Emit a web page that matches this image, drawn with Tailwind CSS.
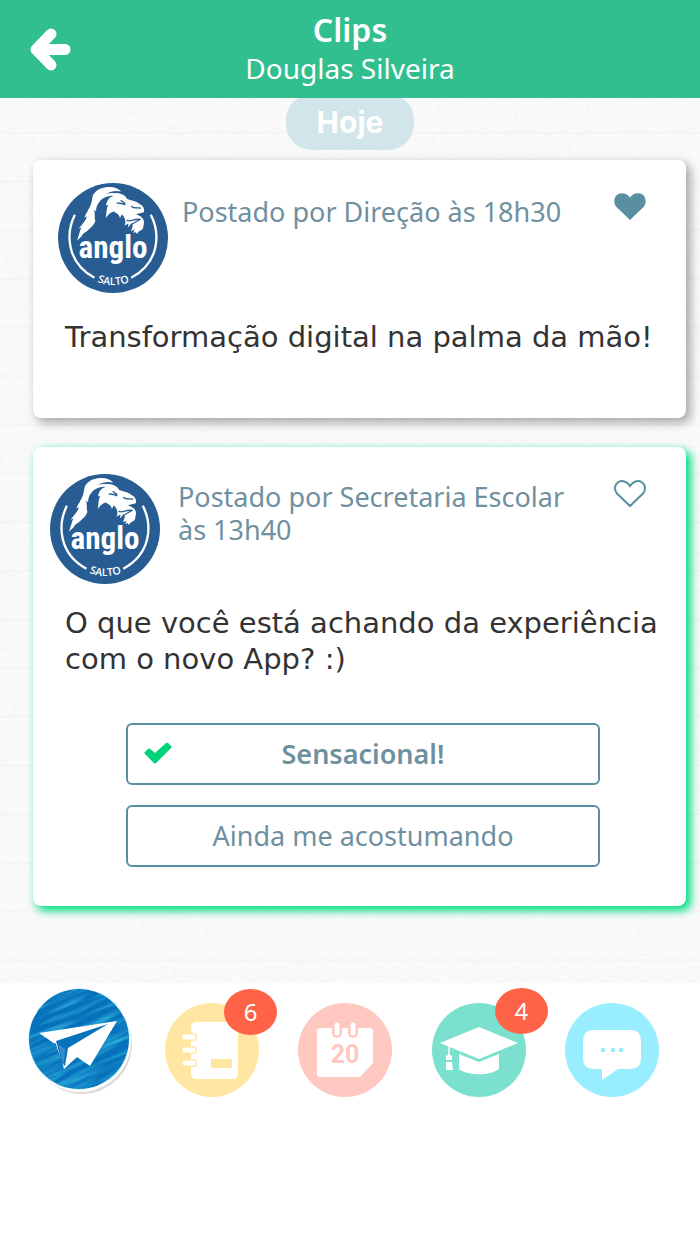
<!DOCTYPE html>
<html lang="pt-BR">
<head>
<meta charset="utf-8">
<meta name="viewport" content="width=device-width, initial-scale=1">
<title>Clips</title>
<script src="https://cdn.jsdelivr.net/npm/@tailwindcss/browser@4"></script>
</head>
<body class="min-h-screen bg-white font-['Noto_Sans',sans-serif] text-[#6f909f]">
<svg class="hidden" aria-hidden="true">
  <symbol id="anglo" viewBox="55 38 332 332">
    <circle cx="221" cy="204" r="166" fill="#275d93"/>
    <path d="M106 134C78 190 80 278 165 324M335 134C364 190 362 278 276 324" fill="none" stroke="#fff" stroke-width="7"/>
    <path fill="#fff" d="M112 212C120 192 120 182 126 172L117 176C130 160 140 150 142 138L134 142C144 122 152 112 156 96L160 76C168 60 184 52 206 50C224 49 238 54 246 64C228 60 214 64 200 72C216 66 230 68 238 76C216 74 198 78 186 88C174 100 170 110 170 124L164 118C168 134 164 144 168 152C164 166 148 180 130 192C126 202 118 206 112 212Z"/>
    <path fill="#fff" d="M199 144C202 130 200 116 207 104L200 106C202 90 210 80 222 78L214 72C234 64 254 70 264 86C276 90 292 92 302 102C312 106 317 116 314 126L290 132C302 136 312 142 314 152C316 160 312 166 312 174C308 184 298 180 294 192L288 186L282 190L286 178L276 184C278 172 284 166 278 158L266 172L268 160L256 166C262 152 256 142 248 132L242 144C240 132 232 130 224 124C214 126 206 134 199 144Z"/>
    <path d="M232 98C244 100 250 98 258 104M244 90L258 100M276 108C284 116 296 112 306 114M262 150C274 158 284 144 302 148C294 154 286 156 280 162" fill="none" stroke="#275d93" stroke-width="4"/>
    <text x="221" y="264" text-anchor="middle" font-family="Liberation Sans Narrow, Roboto Condensed, sans-serif" font-weight="700" font-size="94" fill="#fff">anglo</text>
    <path id="arc" d="M160 331Q221 361 284 331" fill="none"/>
    <text font-family="Open Sans, sans-serif" font-weight="600" font-size="32" fill="#fff" text-anchor="middle"><textPath href="#arc" startOffset="50%">SALTO</textPath></text>
  </symbol>
</svg>

<header class="relative z-10 flex h-[98px] items-center justify-center bg-[#32bf8f] text-white">
  <button aria-label="Voltar" class="absolute left-[30px] top-7">
    <svg class="h-[43px] w-[41px]" viewBox="0 0 41 43" fill="none" stroke="#fff" stroke-width="11" stroke-linecap="round" stroke-linejoin="round"><path d="M21 6L6 21.500L21 37M8 21.500H35"/></svg>
  </button>
  <div class="text-center">
    <h1 class="text-[32px] font-semibold leading-[38px]">Clips</h1>
    <p class="text-[28px] leading-[38px]">Douglas Silveira</p>
  </div>
</header>

<main class="relative isolate bg-[#fafafa] pr-3.5 pb-[77px] pl-[33px]">
  <svg class="absolute inset-0 -z-10 h-full w-full" aria-hidden="true">
    <filter id="paper" x="0" y="0" width="100%" height="100%"><feTurbulence type="fractalNoise" baseFrequency="0.22" numOctaves="3"/><feColorMatrix values="0 0 0 0 0.5 0 0 0 0 0.5 0 0 0 0 0.5 0.140 0 0 0 -0.055"/></filter>
    <rect width="100%" height="100%" filter="url(#paper)"/>
  </svg>
  <div class="absolute inset-0 -z-10 bg-[linear-gradient(transparent_34px,#f4f4f4_34px,#f4f4f4_36px,transparent_36px)] bg-[length:100%_5.5%]"></div>

  <div class="flex justify-center pr-[19px]">
    <h2 class="-mt-1 flex h-14 w-32 items-center justify-center rounded-[26px] bg-[#d2e5ea] font-['Inter',sans-serif] text-[30px] font-bold text-white">Hoje</h2>
  </div>

  <article class="mt-2.5 h-[258px] rounded-lg bg-white px-[25px] pt-[23px] shadow-[4px_4px_10px_1px_#00000050]">
    <div class="flex items-start gap-3.5">
      <svg class="size-[110px] shrink-0" role="img" aria-label="Anglo Salto"><use href="#anglo"/></svg>
      <p class="mt-3 flex-1 text-[27px] leading-[33px]">Postado por Direção às 18h30</p>
      <button aria-label="Descurtir" class="mt-2.5 mr-[15px]"><svg class="h-7 w-8" viewBox="0 0 32 28" fill="#5a8fa1"><path d="M16 27L2.500 14C-1 10 0 4 3.500 1.500C7.500-1 13 0 16 4.500C19 0 24.500-1 28.500 1.500C32 4 33 10 29.500 14Z"/></svg></button>
    </div>
    <p class="mt-[26px] ml-[7px] font-['DejaVu_Sans',sans-serif] text-[29px] leading-9 text-[#333]">Transformação digital na palma da mão!</p>
  </article>

  <article class="mt-[29px] rounded-lg bg-white px-[17px] pt-[27px] pb-[39px] shadow-[4px_4px_8px_1px_#00df82]">
    <div class="flex items-start gap-[18px]">
      <svg class="size-[110px] shrink-0" role="img" aria-label="Anglo Salto"><use href="#anglo"/></svg>
      <p class="mt-1.5 flex-1 text-[27px] leading-[33px]">Postado por Secretaria Escolar<br>às 13h40</p>
      <button aria-label="Curtir" class="mt-1.5 mr-[23px]"><svg class="h-7 w-8" viewBox="0 0 32 28" fill="none" stroke="#5a8fa1" stroke-width="2"><path d="M16 26L3 13.500C0 10 .5 4.500 4 2.300C8 0 13 1 16 6C19 1 24 0 28 2.300C31.500 4.500 32 10 29 13.500Z"/></svg></button>
    </div>
    <p class="mt-[21px] ml-[15px] font-['DejaVu_Sans',sans-serif] text-[29px] leading-9 text-[#333]">O que você está achando da experiência<br>com o novo App? :)</p>
    <div class="mt-[46px] mr-[69px] ml-[76px] flex flex-col gap-5">
      <button class="relative h-[62px] rounded-md border-2 border-[#5a8fa1] text-[27px] font-semibold">
        <svg class="absolute left-4 top-[17px] h-[22px] w-7" viewBox="0 0 28 22" fill="#00d27a" stroke="#00d27a" stroke-width="3" stroke-linejoin="round"><path d="M2 11L5 8L11 13L23 2L26 5L11 20Z"/></svg>
        Sensacional!
      </button>
      <button class="h-[62px] rounded-md border-2 border-[#5a8fa1] text-[27px]">Ainda me acostumando</button>
    </div>
  </article>
</main>

<nav class="grid grid-cols-5 justify-items-center pt-1 pr-[21px] pl-3">
  <a href="#clips" aria-label="Clips">
    <svg class="h-[110px] w-[106px]" viewBox="0 0 106 110">
      <defs><clipPath id="disc"><circle cx="53" cy="52" r="51"/></clipPath>
      <filter id="scratch" x="0" y="0" width="100%" height="100%"><feTurbulence type="fractalNoise" baseFrequency="0.02 0.22" numOctaves="2" seed="4"/><feColorMatrix values="0 0 0 0 0.050 0 0 0 0 0.600 0 0 0 0 0.820 1.500 0 0 0 -0.600"/></filter></defs>
      <circle cx="56" cy="57" r="50" fill="#dcdcdc"/><circle cx="54" cy="54" r="51" fill="#fff"/>
      <circle cx="53" cy="52" r="50" fill="#0670bb"/>
      <g clip-path="url(#disc)"><g transform="rotate(-24 53 52)"><rect x="-15" y="-15" width="136" height="136" filter="url(#scratch)" style="color-interpolation-filters:sRGB"/></g></g>
      <path fill="#fff" d="M13 46L91 34L64 79L51 70L38 82L29 57Z"/>
      <path fill="#0772bc" d="M30 54L82 37L42 61L39 79L36 76Z"/>
      <path d="M29 56L37 80" stroke="#0772bc" stroke-width="1"/><path d="M32 57L38 79L39 62Z" fill="#fff" opacity=".2"/>
    </svg>
  </a>
  <a href="#agenda" aria-label="Agenda" class="relative mt-4">
    <svg class="size-[94px]" viewBox="0 0 94 94"><circle cx="47" cy="47" r="47" fill="#ffe7a3"/>
      <rect x="26" y="19" width="47" height="57" rx="5" fill="#fff"/>
      <g stroke-linecap="round" fill="none"><path d="M23 34H28M23 47H28M23 60H28" stroke="#ffe7a3" stroke-width="8"/><path d="M20 34H28M20 47H28M20 60H28" stroke="#fff" stroke-width="5"/></g>
      <rect x="46" y="56" width="21" height="9" fill="#ffe7a3"/></svg>
    <span class="absolute -top-3.5 left-[59px] flex h-[46px] w-[53px] items-center justify-center rounded-[50%] bg-[#ff6347] text-2xl text-white">6</span>
  </a>
  <a href="#calendario" aria-label="Calendário" class="mt-4">
    <svg class="size-[94px]" viewBox="0 0 94 94"><circle cx="47" cy="47" r="47" fill="#ffc8c0"/>
      <path fill="#fff" d="M22 25H72Q75 25 75 28V60L62 74H22Q19 74 19 71V28Q19 25 22 25Z"/>
      <path d="M39 22V30M55 22V30" stroke="#ffc8c0" stroke-width="10" stroke-linecap="round"/><path d="M39 22V30M55 22V30" stroke="#fff" stroke-width="5" stroke-linecap="round"/>
      <text x="47" y="60" text-anchor="middle" font-family="Roboto, sans-serif" font-size="25" font-weight="700" fill="#ffc8c0">20</text></svg>
  </a>
  <a href="#escola" aria-label="Escola" class="relative mt-4">
    <svg class="size-[94px]" viewBox="0 0 94 94"><circle cx="47" cy="47" r="47" fill="#7ce0cf"/>
      <path fill="#fff" d="M8 40L47 24L86 40L47 56ZM27 51L47 59L67 51V66C58 73 36 73 27 66ZM14 53Q17 50 20 53V57H14ZM14 59H20L21 67H14Z"/><path d="M17 43V54" stroke="#fff" stroke-width="1.500"/></svg>
    <span class="absolute -top-[15px] left-[63px] flex h-[46px] w-[53px] items-center justify-center rounded-[50%] bg-[#ff6347] text-2xl text-white">4</span>
  </a>
  <a href="#mensagens" aria-label="Mensagens" class="mt-4">
    <svg class="size-[94px]" viewBox="0 0 94 94"><circle cx="47" cy="47" r="47" fill="#98eeff"/>
      <path fill="#fff" d="M29 27H65Q76 27 76 38V55Q76 66 65 66H53L37 77V66H29Q18 66 18 55V38Q18 27 29 27Z"/>
      <path d="M36 45h4v4h-4zM46 45h4v4h-4zM54 45h4v4h-4z" fill="#98eeff"/></svg>
  </a>
</nav>
</body>
</html>
